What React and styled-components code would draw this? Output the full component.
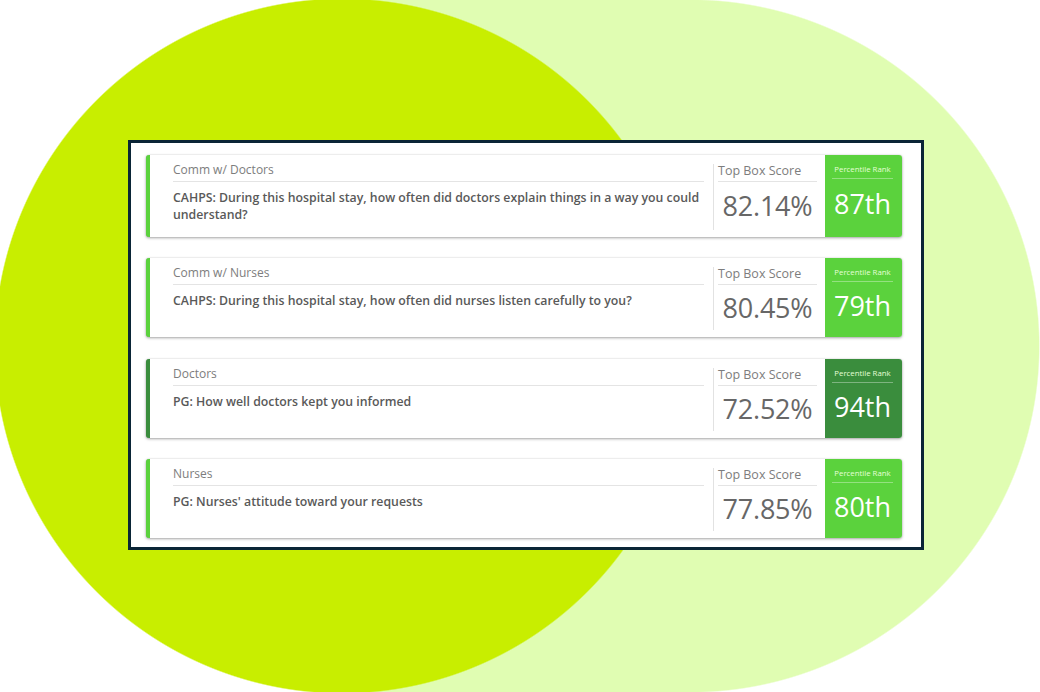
import React from "react";
import styled, { createGlobalStyle } from "styled-components";

const GlobalStyle = createGlobalStyle`
  html, body {
    margin: 0;
    padding: 0;
    background: #ffffff;
  }
  body {
    font-family: "Open Sans", "Liberation Sans", Arial, sans-serif;
  }
`;

const LIME = "#c8ee00";
const MINT = "#e0fdb2";

const Page = styled.div`
  width: 1040px;
  height: 692px;
  box-sizing: border-box;
  padding: 140px 0 0 128px;
  overflow: hidden;
  background-color: #ffffff;
  background-image:
    radial-gradient(circle 348px at 342px 346px, ${LIME} 99.6%, transparent 100%),
    radial-gradient(350px 347px at 690px 346px, ${MINT} 99.6%, transparent 100%),
    linear-gradient(${MINT}, ${MINT});
  background-repeat: no-repeat;
  background-size: 100% 100%, 100% 100%, 350px 100%;
  background-position: 0 0, 0 0, 340px 0;
`;

const Frame = styled.div`
  width: 796px;
  height: 410px;
  box-sizing: border-box;
  border: 3px solid #0a2536;
  background: #ffffff;
  padding: 12px 19px 9px 15px;
  display: flex;
  flex-direction: column;
  gap: 21.5px;
`;

const Row = styled.div`
  display: flex;
  min-height: 79px;
  background: #ffffff;
  border-left: 4px solid ${(p) => p.$accent};
  border-radius: 3px;
  box-shadow: 0 1px 3px rgba(0, 0, 0, 0.35), 0 0 1px rgba(0, 0, 0, 0.25);
`;

const Main = styled.div`
  flex: 1;
  padding: 7px 9px 14px 23px;
  min-width: 0;
`;

const Category = styled.div`
  font-size: 12px;
  line-height: 16px;
  color: #7d7d7d;
  padding-bottom: 3px;
  border-bottom: 1px solid #e4e4e4;
`;

const Question = styled.div`
  margin-top: 7px;
  font-size: 12.3px;
  font-weight: 600;
  line-height: 17px;
  color: #595959;
`;

const ScoreCol = styled.div`
  width: 112px;
  box-sizing: border-box;
  margin: 9px 0 7px;
  padding: 0 8px 0 4px;
  border-left: 1px solid #e2e2e2;
  display: flex;
  flex-direction: column;
`;

const ScoreLabel = styled.div`
  font-size: 12.5px;
  line-height: 14px;
  color: #7d7d7d;
  padding-bottom: 3px;
  border-bottom: 1px solid #e4e4e4;
  white-space: nowrap;
`;

const ScoreValue = styled.div`
  flex: 1;
  display: flex;
  align-items: center;
  justify-content: center;
  font-size: 27px;
  font-weight: 500;
  color: #676767;
  letter-spacing: -0.2px;
`;

const Rank = styled.div`
  width: 77px;
  box-sizing: border-box;
  padding: 9px 9px 8px 7px;
  background: ${(p) => p.$bg};
  border-radius: 0 3px 3px 0;
  display: flex;
  flex-direction: column;
`;

const RankLabel = styled.div`
  font-size: 7.8px;
  font-weight: 500;
  line-height: 11px;
  color: #e6ffd8;
  text-align: center;
  white-space: nowrap;
  padding-bottom: 3px;
  border-bottom: 1px solid rgba(255, 255, 255, 0.35);
`;

const RankValue = styled.div`
  flex: 1;
  display: flex;
  align-items: center;
  justify-content: center;
  font-size: 27px;
  font-weight: 500;
  color: #ffffff;
`;

const BRIGHT = "#5bd23d";
const DARK = "#3a8d3d";

const rows = [
  {
    category: "Comm w/ Doctors",
    question:
      "CAHPS: During this hospital stay, how often did doctors explain things in a way you could understand?",
    score: "82.14%",
    rank: "87th",
    color: BRIGHT,
  },
  {
    category: "Comm w/ Nurses",
    question:
      "CAHPS: During this hospital stay, how often did nurses listen carefully to you?",
    score: "80.45%",
    rank: "79th",
    color: BRIGHT,
  },
  {
    category: "Doctors",
    question: "PG: How well doctors kept you informed",
    score: "72.52%",
    rank: "94th",
    color: DARK,
  },
  {
    category: "Nurses",
    question: "PG: Nurses' attitude toward your requests",
    score: "77.85%",
    rank: "80th",
    color: BRIGHT,
  },
];

export default function App() {
  return (
    <>
      <GlobalStyle />
      <Page>
        <Frame>
          {rows.map((row) => (
            <Row key={row.category} $accent={row.color}>
              <Main>
                <Category>{row.category}</Category>
                <Question>{row.question}</Question>
              </Main>
              <ScoreCol>
                <ScoreLabel>Top Box Score</ScoreLabel>
                <ScoreValue>{row.score}</ScoreValue>
              </ScoreCol>
              <Rank $bg={row.color}>
                <RankLabel>Percentile Rank</RankLabel>
                <RankValue>{row.rank}</RankValue>
              </Rank>
            </Row>
          ))}
        </Frame>
      </Page>
    </>
  );
}
